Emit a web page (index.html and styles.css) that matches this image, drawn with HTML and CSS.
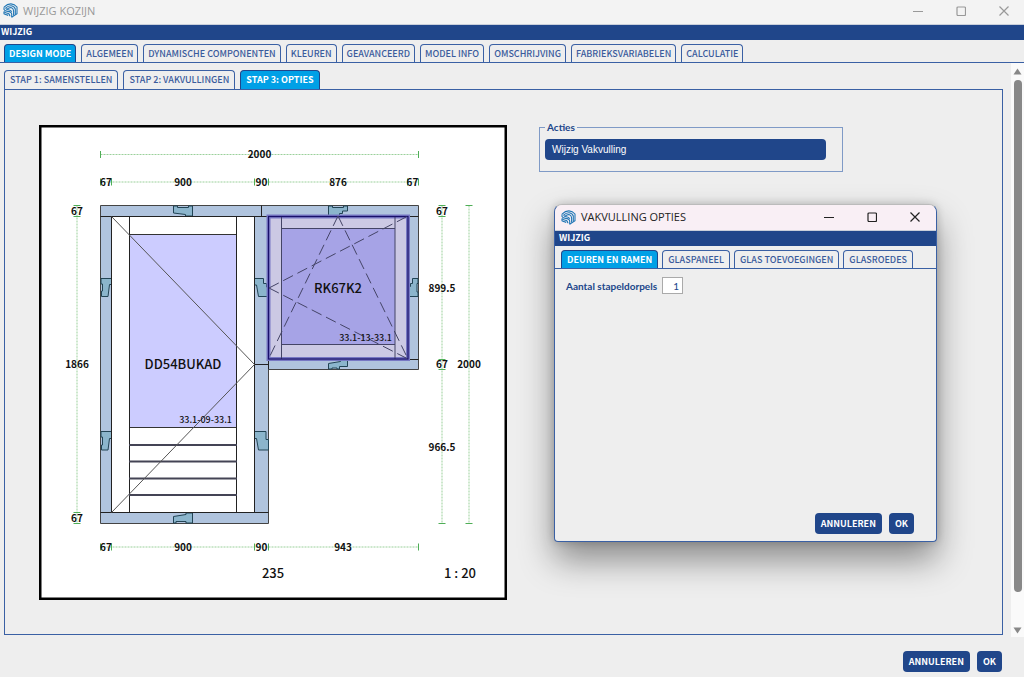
FILE: index.html
```html
<!DOCTYPE html>
<html lang="nl">
<head>
<meta charset="utf-8">
<title>Wijzig kozijn</title>
<link rel="stylesheet" href="styles.css">
</head>
<body>
<svg class="defs" aria-hidden="true">
  <symbol id="logo" viewBox="0 0 15 15">
    <g fill="none" stroke="currentColor" stroke-width="1.1">
      <path d="M1 4.200Q4.500 .8 8 .9Q11.500 1.200 14 4V10.800L8.600 14.200"/>
      <path d="M2.500 5.200Q5.500 2.500 8.300 2.800Q11.500 3.400 12.300 6V11.500"/>
      <path d="M4.300 6Q6.600 4.100 8.600 4.800Q10.500 5.800 10.600 8V12.600"/>
      <path d="M1 4.200V6.600Q1.800 8.200 4.600 8.400Q8.400 8.800 8.700 11V14.200"/>
      <path d="M2.700 5.200Q3.200 6.700 5.400 6.800Q7.900 7 8.800 8.700"/>
      <path d="M1 8.600Q2.400 10 4.400 10.200Q6.700 10.500 6.900 13.300"/>
      <path d="M1 8.600V10.800Q2.400 11.800 4 11.900L5.200 12.500"/>
    </g>
  </symbol>
  <symbol id="min" viewBox="0 0 10 10"><path d="M0 5.5H10" fill="none" stroke="currentColor"/></symbol>
  <symbol id="max" viewBox="0 0 10 10"><rect x="1" y="1" width="8.5" height="8.5" rx="1" fill="none" stroke="currentColor" stroke-width="1.2"/></symbol>
  <symbol id="close" viewBox="0 0 10 10"><path d="M.5 .5L9.5 9.5M9.5 .5L.5 9.5" fill="none" stroke="currentColor" stroke-width="1.2"/></symbol>
</svg>

<div class="window">
  <header class="titlebar">
    <svg class="logo"><use href="#logo"/></svg>
    <h1 class="title">WIJZIG KOZIJN</h1>
    <div class="controls">
      <button aria-label="Minimaliseren"><svg><use href="#min"/></svg></button>
      <button aria-label="Maximaliseren"><svg><use href="#max"/></svg></button>
      <button aria-label="Sluiten"><svg><use href="#close"/></svg></button>
    </div>
  </header>
  <div class="menubar">WIJZIG</div>
  <nav class="tabs tabs-main">
    <button class="tab active">DESIGN MODE</button>
    <button class="tab">ALGEMEEN</button>
    <button class="tab">DYNAMISCHE COMPONENTEN</button>
    <button class="tab">KLEUREN</button>
    <button class="tab">GEAVANCEERD</button>
    <button class="tab">MODEL INFO</button>
    <button class="tab">OMSCHRIJVING</button>
    <button class="tab">FABRIEKSVARIABELEN</button>
    <button class="tab">CALCULATIE</button>
  </nav>

  <div class="body">
    <main class="page">
      <nav class="tabs tabs-steps">
        <button class="tab">STAP 1: SAMENSTELLEN</button>
        <button class="tab">STAP 2: VAKVULLINGEN</button>
        <button class="tab active">STAP 3: OPTIES</button>
      </nav>
      <section class="panel">
        <svg class="drawing" viewBox="39 125 468 475" role="img" aria-label="Kozijntekening">
          <rect x="40.25" y="126.25" width="465.5" height="472.5" fill="#fff" stroke="#000" stroke-width="2.5"/>
          <g class="dim">
            <path d="M100.5 154.5H418M100.5 182H418M100.5 547H418M77 205.5V523M442 205.5V523M469 205.5V523"/>
          </g>
          <g class="tick">
            <path d="M100.5 151v7M418.5 151v7"/>
            <path d="M100.5 178.500v7M111.500 178.500v7M254.500 178.500v7M268.500 178.500v7M407.500 178.500v7M418.500 178.500v7"/>
            <path d="M100.500 543.500v7M111.500 543.500v7M254.500 543.500v7M268.500 543.500v7M418.500 543.500v7"/>
            <path d="M73.500 205.500h7M73.500 216.500h7M73.500 512.500h7M73.500 523.500h7"/>
            <path d="M438.500 205.500h7M438.500 216.500h7M438.500 359.500h7M438.500 369.500h7M438.500 523.500h7M465.500 205.500h7M465.500 523.500h7"/>
          </g>
          <path class="frame" d="M100.500 205.500H418.500V369.500H268.500V523.500H100.500Z"/>
          <g class="joint">
            <path d="M173.500 206H177.500V207.500H188.500V206H192.500V216H185.500V214.500L173.500 213Z"/>
            <path d="M328.500 206H332.500V207.500H343.500V206H347.500V211H342.500V213.500H339.500V216H328.500Z"/>
            <path d="M101 278.500H111.500V284.500H109.500L108 296.500H101.500V291H102.500V284H101Z"/>
            <path d="M254.500 278.500H263.500V283.500H266.500V287H268.500V296.500H258.500L256.500 285H254.500Z"/>
            <path d="M412.500 278.500H418V283.500H417V292H418V296.500H408.500V286.500H410.500V283.500H412.500Z"/>
            <path d="M101 431.500H111.500V438.500H109.500L108 450H101.500V445H102.500V437H101Z"/>
            <path d="M254.500 431.500H266V439.500H268.500V450H258.500L256.500 438.500H254.500Z"/>
            <path d="M173.500 516.500L186 514.500V513H192.500V523H186V521.500H176V523H173.500Z"/>
            <path d="M328.500 363.500L340.500 361.500V360H347.500V366.500H339.500V369H337V368H332V369H328.500Z"/>
          </g>
          <rect x="111.500" y="216.500" width="143" height="296" fill="#fff" stroke="#111"/>
          <rect x="129.500" y="234.500" width="107" height="193" fill="#ccccff" stroke="#333"/>
          <g class="line">
            <path d="M100.500 216.500H418.500M100.500 512.500H268.500M111.500 216.500V512.500M254.500 216.500V512.500"/>
            <path d="M129.500 216.500V512.500M236.500 216.500V512.500M261.500 205.500V216.500M254.500 364.500H268.500M268.500 359.500H418.500M268.500 359.500V369.500"/>
          </g>
          <path d="M129 445H237M129 461.500H237M129 478.500H237M129 495H237" fill="none" stroke="#444455" stroke-width="2"/>
          <path d="M111.500 216.500L254.500 364.500L111.500 512.500" fill="none" stroke="#555"/>
          <rect x="268.500" y="216.500" width="139.500" height="142.500" fill="#ccc9e4" stroke="#7878c4" stroke-width="4"/>
          <rect x="281.500" y="228.500" width="113.500" height="116" fill="#a6a3e6"/>
          <path d="M281.500 216V359M395 216V359M281.500 228.500H395M281.500 344.500H395" fill="none" stroke="#444466"/>
          <rect x="268.500" y="216.500" width="139.500" height="142.500" fill="none" stroke="#18106a" stroke-width="1.200"/>
          <path d="M338 216L268.500 359M338 216L408 359M269 288L408 216M269 288L408 359" fill="none" stroke="#444466" stroke-dasharray="11 5"/>
          <g class="num">
            <text x="259.500" y="158">2000</text>
            <text x="106" y="186">67</text><text x="183" y="186">900</text><text x="261.500" y="186">90</text><text x="338" y="186">876</text><text x="412.500" y="186">67</text>
            <text x="77" y="214.500">67</text><text x="77" y="368">1866</text><text x="77" y="521.500">67</text>
            <text x="442" y="214.500">67</text><text x="442" y="291.500">899.5</text><text x="442" y="368">67</text><text x="469" y="368">2000</text><text x="442" y="450.500">966.5</text>
            <text x="106" y="550.500">67</text><text x="183" y="550.500">900</text><text x="261.500" y="550.500">90</text><text x="343" y="550.500">943</text>
          </g>
          <g class="name">
            <text x="183" y="369">DD54BUKAD</text><text x="338" y="293">RK67K2</text>
            <text x="273" y="578">235</text><text x="460" y="578">1 : 20</text>
          </g>
          <g class="glass">
            <text x="232" y="423">33.1-09-33.1</text><text x="392" y="341">33.1-13-33.1</text>
          </g>
        </svg>
        <fieldset class="actions">
          <legend>Acties</legend>
          <button class="action">Wijzig Vakvulling</button>
        </fieldset>
      </section>
    </main>
    <div class="scrollbar" aria-hidden="true">
      <svg viewBox="0 0 9 7"><path d="M4.500 .5L8.500 6.500H.5Z"/></svg>
      <div class="thumb"></div>
      <svg viewBox="0 0 9 7"><path d="M4.500 6.500L8.500 .5H.5Z"/></svg>
    </div>
  </div>

  <footer class="footer">
    <button class="btn">ANNULEREN</button>
    <button class="btn">OK</button>
  </footer>
</div>

<div class="dialog" role="dialog" aria-labelledby="dialog-title">
  <header class="titlebar">
    <svg class="logo"><use href="#logo"/></svg>
    <h2 class="title" id="dialog-title">VAKVULLING OPTIES</h2>
    <div class="controls">
      <button aria-label="Minimaliseren"><svg><use href="#min"/></svg></button>
      <button aria-label="Maximaliseren"><svg><use href="#max"/></svg></button>
      <button aria-label="Sluiten"><svg><use href="#close"/></svg></button>
    </div>
  </header>
  <div class="menubar">WIJZIG</div>
  <nav class="tabs tabs-dialog">
    <button class="tab active">DEUREN EN RAMEN</button>
    <button class="tab">GLASPANEEL</button>
    <button class="tab">GLAS TOEVOEGINGEN</button>
    <button class="tab">GLASROEDES</button>
  </nav>
  <div class="form">
    <label for="sills">Aantal stapeldorpels</label>
    <input id="sills" type="text" value="1">
  </div>
  <footer class="dialog-footer">
    <button class="btn">ANNULEREN</button>
    <button class="btn">OK</button>
  </footer>
</div>
</body>
</html>
```

FILE: styles.css
```css
:root {
  --navy: #20468a;
  --line: #3a60a4;
  --cyan: #00a0e6;
  --bg: #eeeeee;
  --ui: Lato, "Noto Sans", sans-serif;
  --narrow: "Noto Sans CJK SC", "Noto Sans", sans-serif;
}
* { box-sizing: border-box; }
body {
  margin: 0;
  background: var(--bg);
  font-family: var(--ui);
  font-size: 10px;
  color: var(--navy);
}
button, input { font: inherit; color: inherit; }
.defs { position: absolute; width: 0; height: 0; }
.window { display: flex; flex-direction: column; min-height: 100vh; }

.titlebar {
  display: flex;
  align-items: center;
  height: 25px;
  padding: 0 15px 3px 3px;
  background: #f3f3f3;
  border-bottom: 1px solid #c9cfda;
  color: #999;
}
.logo { width: 15px; height: 15px; color: #2277b5; }
.title {
  margin: 0 0 0 5px;
  font: 400 11px/16px "Open Sans", sans-serif;
}
.controls { display: flex; gap: 33px; margin-left: auto; }
.controls button { display: flex; padding: 0; border: 0; background: none; }
.controls svg { width: 10px; height: 10px; }

.menubar {
  height: 15px;
  padding-left: 1px;
  background: var(--navy);
  color: #fff;
  font: 700 9px/13px var(--narrow);
}

.tabs { display: flex; gap: 5px; border-bottom: 1px solid var(--line); }
.tabs-main { padding: 4px 4px 0; }
.tabs-steps { padding-top: 7px; }
.tab {
  height: 18px;
  padding: 0 4px;
  border: 1px solid var(--line);
  border-bottom: 0;
  border-radius: 4px 4px 0 0;
  background: var(--bg);
  color: #3a5b9c;
  font: 500 9px/16px var(--narrow);
  white-space: nowrap;
}
.tabs-steps .tab { height: 19px; padding: 0 5px; }
.tab.active { background: var(--cyan); border-color: var(--navy); color: #fff; font-weight: 700; }

.body { display: flex; flex: 1; }
.page { flex: 1; min-width: 0; padding: 0 8px 2px 4px; }
.panel {
  display: flex;
  align-items: flex-start;
  gap: 32px;
  padding: 35px 34px 34px;
  border: 1px solid var(--line);
  border-top: 0;
}
.drawing { flex: none; width: 468px; }
.dim path { fill: none; stroke: #9bd09b; stroke-dasharray: 2 1; }
.tick path { fill: none; stroke: #4fae57; }
.frame { fill: #b0c4de; stroke: #444; }
.joint path { fill: #8bb5cc; stroke: #224455; }
.line path { fill: none; stroke: #222; }
.drawing text { fill: #111; font-family: var(--narrow); font-weight: 700; text-anchor: middle; }
.num text { font-size: 10px; }
.name text { font-size: 13px; font-weight: 500; }
.drawing .glass text { font-size: 9px; font-weight: 500; text-anchor: end; }

.actions {
  flex: 0 1 304px;
  margin: -4px 0 0;
  padding: 6px 16px 11px 5px;
  border: 1px solid #7f9ac6;
}
.actions legend { padding: 0 2px; font-weight: 700; line-height: 12px; }
.action {
  display: block;
  width: 100%;
  height: 21px;
  padding: 0 7px;
  border: 0;
  border-radius: 4px;
  background: var(--navy);
  color: #fff;
  font: 10px "Liberation Sans", sans-serif;
  text-align: left;
}

.scrollbar {
  display: flex;
  flex-direction: column;
  align-items: center;
  gap: 5px;
  width: 13px;
  padding: 5px 0 3px;
  background: #fafafa;
}
.scrollbar svg { width: 9px; height: 7px; fill: #888; }
.thumb { flex: 1; width: 8px; margin-bottom: 30px; border-radius: 4px; background: #888; }

.footer { display: flex; justify-content: flex-end; gap: 7px; padding: 14px 22px 5px; }
.btn {
  height: 21px;
  padding: 0 6px;
  border: 0;
  border-radius: 4px;
  background: var(--navy);
  color: #fff;
  font: 700 9px/21px var(--narrow);
}

.dialog {
  position: absolute;
  top: 204px;
  left: 554px;
  display: flex;
  flex-direction: column;
  width: 383px;
  min-height: 338px;
  border: 1px solid var(--line);
  border-top-color: #bbb;
  border-radius: 8px 8px 4px 4px;
  background: var(--bg);
  box-shadow: 0 18px 34px rgba(0, 0, 0, .42), 0 0 8px rgba(0, 0, 0, .2);
  overflow: hidden;
}
.dialog .titlebar { height: 26px; padding: 0 16px 1px 6px; background: #f9eff5; color: #222; }
.dialog .menubar { padding-left: 4px; }
.tabs-dialog { padding: 4px 6px 0; }
.tabs-dialog .tab { padding: 0 5px; }
.tabs-dialog { gap: 4px; }
.form { display: flex; align-items: center; gap: 5px; padding: 8px 11px; font-weight: 700; }
.form input {
  width: 21px;
  height: 17px;
  padding: 0 3px;
  border: 1px solid #aaa;
  background: #fff;
  font-weight: 400;
  text-align: right;
}
.dialog-footer { display: flex; justify-content: flex-end; gap: 7px; margin-top: auto; padding: 0 22px 7px; }
```
